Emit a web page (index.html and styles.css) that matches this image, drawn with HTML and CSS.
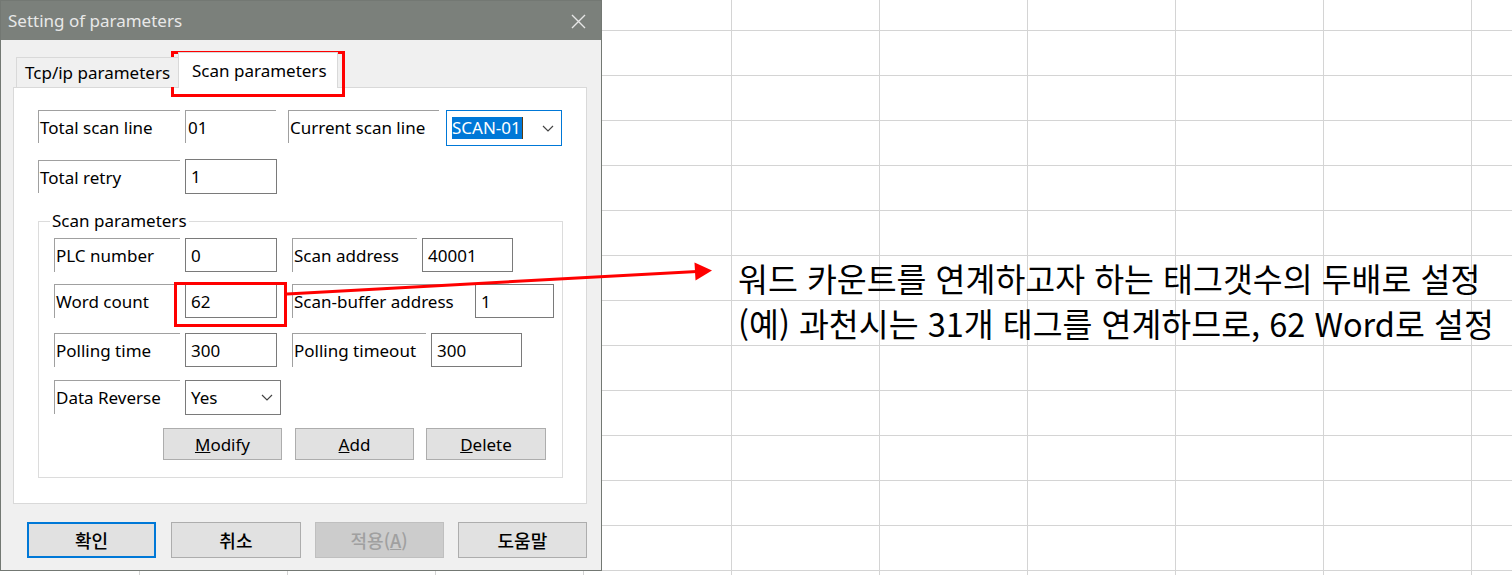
FILE: index.html
```html
<!DOCTYPE html>
<html lang="ko">
<head>
<meta charset="utf-8">
<title>Setting of parameters</title>
<link rel="stylesheet" href="styles.css">
</head>
<body>
<div class="page">
  <div class="dialog">
    <div class="titlebar">
      <span class="title">Setting of parameters</span>
      <svg class="close" width="15" height="15" viewBox="0 0 15 15"><path d="M1 1L14 14M14 1L1 14" stroke="#e6e6e6" stroke-width="1.4" fill="none"/></svg>
    </div>
    <div class="tabs">
      <div class="tab">Tcp/ip parameters</div>
      <div class="tab active">Scan parameters</div>
    </div>
    <div class="panel">
      <div class="row row-top">
        <div class="lbl lbl-total">Total scan line</div>
        <div class="ro">01</div>
        <div class="lbl lbl-current">Current scan line</div>
        <div class="combo combo-focus">
          <span class="sel">SCAN-01</span><span class="caret"></span>
          <svg class="chev" width="12" height="7" viewBox="0 0 12 7"><polyline points="1,1 6,6 11,1" fill="none" stroke="#444" stroke-width="1.2"/></svg>
        </div>
      </div>
      <div class="row row-retry">
        <div class="lbl lbl-total lbl-retry">Total retry</div>
        <div class="inp inp-left">1</div>
      </div>
      <div class="group">
        <span class="legend">Scan parameters</span>
        <div class="row grow grow-a">
          <div class="lbl glbl">PLC number</div>
          <div class="inp inp-left">0</div>
          <div class="lbl glbl-addr">Scan address</div>
          <div class="inp inp-addr">40001</div>
        </div>
        <div class="row grow grow-b">
          <div class="lbl glbl">Word count</div>
          <div class="inp inp-left">62</div>
          <div class="lbl glbl-buf">Scan-buffer address</div>
          <div class="inp inp-buf">1</div>
        </div>
        <div class="row grow grow-c">
          <div class="lbl glbl">Polling time</div>
          <div class="inp inp-left">300</div>
          <div class="lbl glbl-tmo">Polling timeout</div>
          <div class="inp inp-tmo">300</div>
        </div>
        <div class="row grow grow-d">
          <div class="lbl glbl">Data Reverse</div>
          <div class="combo combo-yes">
            <span>Yes</span>
            <svg class="chev" width="12" height="7" viewBox="0 0 12 7"><polyline points="1,1 6,6 11,1" fill="none" stroke="#444" stroke-width="1.2"/></svg>
          </div>
        </div>
        <div class="row actions">
          <div class="btn btn-modify"><u>M</u>odify</div>
          <div class="btn btn-add"><u>A</u>dd</div>
          <div class="btn btn-delete"><u>D</u>elete</div>
        </div>
      </div>
    </div>
    <div class="footer">
      <div class="dbtn primary">확인</div>
      <div class="dbtn">취소</div>
      <div class="dbtn disabled">적용(<u>A</u>)</div>
      <div class="dbtn">도움말</div>
    </div>
  </div>

  <div class="note">
    <div class="note-line">워드 카운트를 연계하고자 하는 태그갯수의 두배로 설정</div>
    <div class="note-line">(예) 과천시는 31개 태그를 연계하므로, 62 Word로 설정</div>
  </div>

  <div class="mark mark-tab"></div>
  <div class="mark mark-word"></div>
  <svg class="arrow" width="1512" height="575" viewBox="0 0 1512 575">
    <line x1="287" y1="294" x2="697" y2="271.4" stroke="#ff0000" stroke-width="3"/>
    <polygon points="712,270.5 694.5,262.5 695.5,280.5" fill="#ff0000"/>
  </svg>
</div>
</body>
</html>
```

FILE: styles.css
```css
* { box-sizing: border-box; }

html, body {
  margin: 0;
  padding: 0;
}

body {
  width: 1512px;
  height: 575px;
  overflow: hidden;
  background-color: #ffffff;
  background-image:
    linear-gradient(to right, #d4d4d4 1px, transparent 1px),
    linear-gradient(to bottom, #d4d4d4 1px, transparent 1px);
  background-size: 148px 45px, 148px 45px;
  background-position: 139px 0, 0 30px;
  font-family: "Noto Sans", "Noto Sans CJK KR", sans-serif;
  color: #000;
}

.page {
  position: relative;
  display: flex;
  align-items: flex-start;
  width: 1512px;
  height: 575px;
}

/* ---------- dialog ---------- */
.dialog {
  flex: none;
  width: 602px;
  height: 571px;
  border: 1px solid #737873;
  background: #f0f0f0;
  display: flex;
  flex-direction: column;
}

.titlebar {
  height: 39px;
  background: #7b807b;
  color: #e8e8e8;
  font-size: 17px;
  display: flex;
  align-items: center;
  justify-content: space-between;
  padding: 0 15px 0 7px;
}

.close { display: block; margin-top: 2px; }

.tabs {
  position: relative;
  z-index: 2;
  display: flex;
  align-items: flex-end;
  height: 36px;
  margin: 12px 0 -1px 15px;
  font-size: 17px;
}

.tab {
  height: 30px;
  width: 164px;
  margin-bottom: 1px;
  padding-left: 8px;
  border: 1px solid #d9d9d9;
  border-bottom: none;
  background: #f0f0f0;
  display: flex;
  align-items: center;
  white-space: nowrap;
  overflow: hidden;
}

.tab.active {
  position: relative;
  height: 36px;
  width: 160px;
  margin-bottom: 0;
  margin-left: -2px;
  padding-left: 13px;
  background: #ffffff;
}

.panel {
  margin-left: 12px;
  width: 574px;
  height: 417px;
  background: #ffffff;
  border: 1px solid #d9d9d9;
  padding: 22px 0 0 24px;
  font-size: 17px;
}

.row {
  display: flex;
  align-items: flex-start;
}

.lbl {
  height: 33px;
  border-top: 1px solid #a0a0a0;
  border-left: 1px solid #a0a0a0;
  padding-left: 1px;
  display: flex;
  align-items: center;
  white-space: nowrap;
}

.ro {
  width: 91px;
  height: 33px;
  margin-left: 5px;
  border-top: 1px solid #a0a0a0;
  border-left: 1px solid #a0a0a0;
  padding-left: 2px;
  display: flex;
  align-items: center;
}

.inp {
  height: 35px;
  border: 1px solid #7a7a7a;
  background: #ffffff;
  padding-left: 5px;
  display: flex;
  align-items: center;
}

.lbl-total { width: 142px; }
.lbl-current { width: 151px; margin-left: 12px; }

.combo {
  display: flex;
  align-items: center;
  background: #ffffff;
}

.combo-focus {
  width: 116px;
  height: 36px;
  margin-left: 7px;
  border: 1px solid #0078d7;
  padding-left: 5px;
}

.sel {
  background: #0078d7;
  color: #ffffff;
  height: 22px;
  line-height: 22px;
  padding: 0 1px 0 0;
}

.caret {
  width: 1px;
  height: 22px;
  background: #5a3a10;
}

.chev { display: block; margin-left: auto; margin-right: 7px; }

.row-retry { margin-top: 13px; }
.lbl-retry { margin-top: 1px; }
.inp-left { width: 92px; margin-left: 5px; }

/* ---------- group ---------- */
.group {
  position: relative;
  margin-top: 27px;
  width: 525px;
  height: 257px;
  border: 1px solid #dcdcdc;
  padding: 16px 0 0 15px;
}

.legend {
  position: absolute;
  left: 11px;
  top: -13px;
  padding: 0 2px;
  line-height: 24px;
  background: #ffffff;
}

.grow .lbl { height: 34px; }
.grow .inp { height: 34px; }
.grow-b { margin-top: 12px; }
.grow-c { margin-top: 15px; }
.grow-d { margin-top: 13px; }

.glbl { width: 126px; }
.glbl-addr { width: 125px; margin-left: 15px; }
.glbl-buf { width: 178px; margin-left: 15px; }
.glbl-tmo { width: 134px; margin-left: 15px; }
.inp-addr { width: 91px; margin-left: 5px; }
.inp-buf { width: 79px; margin-left: 5px; }
.inp-tmo { width: 91px; margin-left: 5px; }

.combo-yes {
  width: 96px;
  height: 35px;
  margin-left: 5px;
  border: 1px solid #7a7a7a;
  padding-left: 5px;
}

.actions { margin-top: 13px; }

.btn {
  height: 32px;
  border: 1px solid #adadad;
  background: #e1e1e1;
  display: flex;
  align-items: center;
  justify-content: center;
}

.btn-modify { width: 119px; margin-left: 109px; }
.btn-add { width: 119px; margin-left: 13px; }
.btn-delete { width: 120px; margin-left: 12px; }

/* ---------- footer ---------- */
.footer {
  display: flex;
  margin: 18px 0 0 26px;
  font-family: "Noto Sans CJK KR", "Noto Sans", sans-serif;
  font-size: 18px;
  font-weight: 500;
}

.dbtn {
  width: 130px;
  height: 36px;
  border: 1px solid #adadad;
  background: #e1e1e1;
  display: flex;
  align-items: center;
  justify-content: center;
  margin-right: 14px;
}

.dbtn.primary { border: 2px solid #0078d7; margin-right: 15px; }
.dbtn.disabled { background: #cccccc; border-color: #bfbfbf; color: #a0a0a0; }

/* ---------- note ---------- */
.note {
  padding: 255px 0 0 136px;
  font-family: "Noto Sans CJK KR", sans-serif;
  font-size: 32.5px;
  color: #000;
}

.note-line {
  height: 45px;
  display: flex;
  align-items: center;
  white-space: nowrap;
}

/* ---------- annotations ---------- */
.mark {
  position: absolute;
  border: 3px solid #ff0000;
  pointer-events: none;
}

.mark-tab { left: 171px; top: 51px; width: 174px; height: 46px; }
.mark-word { left: 174px; top: 282px; width: 113px; height: 45px; }

.arrow {
  position: absolute;
  left: 0;
  top: 0;
  pointer-events: none;
}
```
